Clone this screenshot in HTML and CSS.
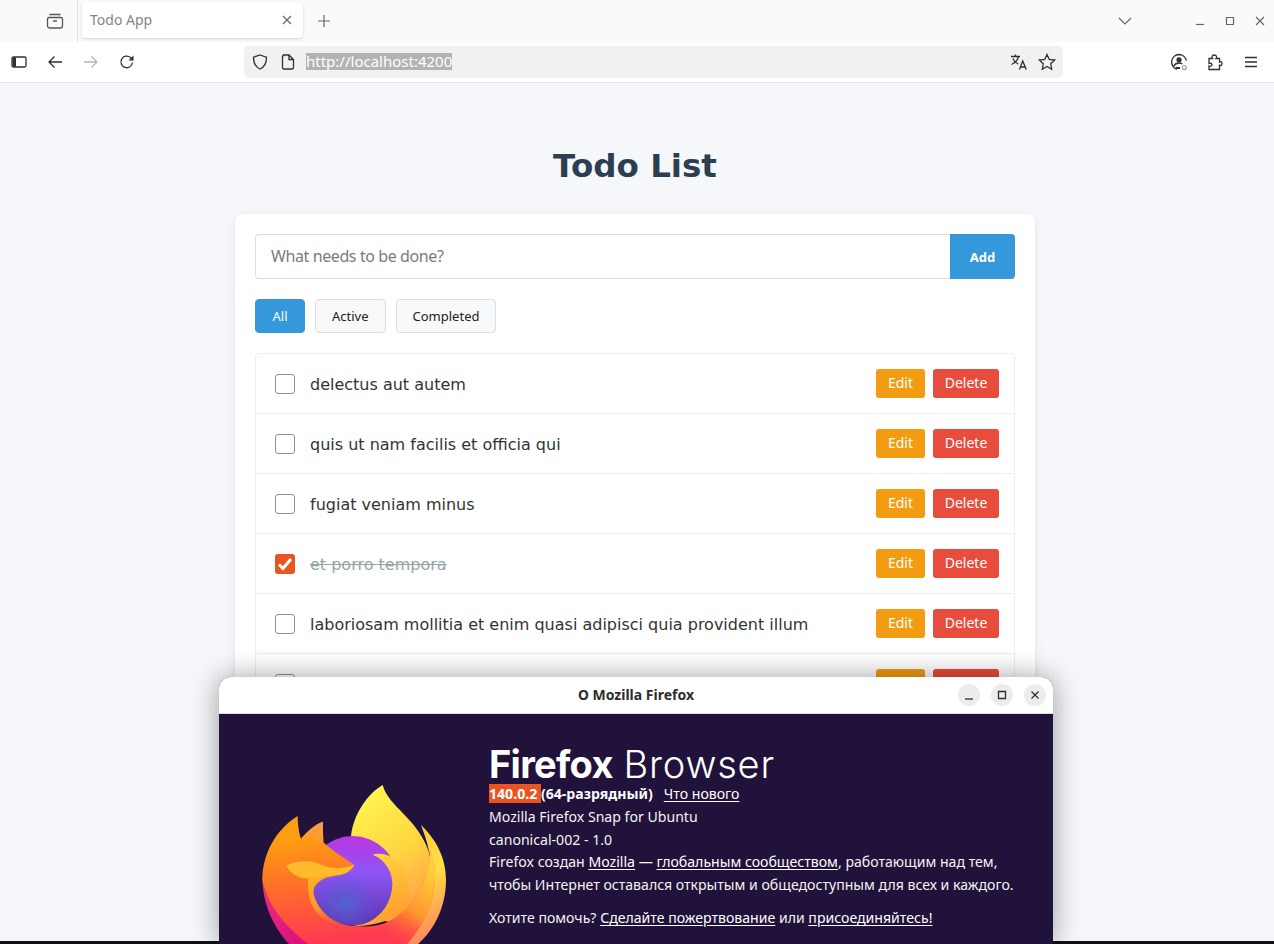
FILE: index.html
```html
<!DOCTYPE html>
<html lang="en">
<head>
<meta charset="utf-8">
<title>Todo App</title>
<link rel="stylesheet" href="styles.css">
</head>
<body>
<div class="browser">
  <div class="tabstrip">
    <div class="tab-group">
      <svg class="ico" width="20" height="20" viewBox="0 0 20 20"><path d="M4.500 3.500h11M2.500 8a1.500 1.500 0 0 1 1.500-1.500h12a1.500 1.500 0 0 1 1.500 1.500v7a2 2 0 0 1-2 2h-11a2 2 0 0 1-2-2zM8 10h4"/></svg>
    </div>
    <div class="tab"><span class="tab-title">Todo App</span>
      <svg class="ico-thin" width="12" height="12" viewBox="0 0 12 12"><path d="M2 2l8 8M10 2l-8 8"/></svg>
    </div>
    <svg class="ico-thin new-tab" width="14" height="14" viewBox="0 0 14 14"><path d="M7 1v12M1 7h12"/></svg>
    <div class="strip-right">
      <svg class="ico-thin" width="14" height="8" viewBox="0 0 14 8"><path d="M1 1l6 6 6-6"/></svg>
      <div class="win-controls">
        <svg class="ico-thin" width="10" height="10" viewBox="0 0 10 10"><path d="M1 8.500h8"/></svg>
        <svg class="ico-thin" width="10" height="10" viewBox="0 0 10 10"><path d="M1.500 1.500h7v7h-7z"/></svg>
        <svg class="ico-thin" width="10" height="10" viewBox="0 0 10 10"><path d="M1 1l8 8M9 1l-8 8"/></svg>
      </div>
    </div>
  </div>
  <div class="toolbar">
    <div class="tool-group">
      <span class="tool"><svg class="ico-dark" width="16" height="16" viewBox="0 0 16 16"><rect x="1" y="3" width="14" height="10" rx="1.500"/><path class="solid" d="M1.500 3.500h3.500v9h-3.500z"/></svg></span>
      <span class="tool"><svg class="ico-dark" width="16" height="16" viewBox="0 0 16 16"><path d="M15 8H2M7.500 2.500L2 8l5.500 5.500"/></svg></span>
      <span class="tool"><svg class="ico-off" width="16" height="16" viewBox="0 0 16 16"><path d="M1 8h13M8.500 2.500L14 8l-5.500 5.500"/></svg></span>
      <span class="tool"><svg class="ico-dark" width="16" height="16" viewBox="0 0 16 16"><path d="M13.500 8.500a5.800 5.800 0 1 1-2-5l2.300 2"/><path class="solid" d="M14.500 1.500v5h-5z"/></svg></span>
    </div>
    <div class="urlbar">
      <svg class="ico-dark" width="16" height="16" viewBox="0 0 16 16"><path d="M8 1l6.500 2.200c0 6-2 9.800-6.500 11.800C3.500 13 1.500 9.200 1.500 3.200z"/></svg>
      <svg class="ico-dark doc" width="14" height="16" viewBox="0 0 14 16"><path d="M2.500 1h5.500l4.500 4.500v8a1.500 1.500 0 0 1-1.500 1.500h-8.500a1.500 1.500 0 0 1-1-1.500v-11a1 1 0 0 1 1-1zM8 1v4.500h4.500"/></svg>
      <span class="url">http://localhost:4200</span>
      <span class="url-end">
        <svg class="ico-dark" width="18" height="18" viewBox="0 0 18 18"><path d="M1 3.500h9M5.500 1.500v2M8.500 3.500c-.8 3.500-3.500 6.500-7 8M2.800 5.500c1 2.500 3 4.500 5.500 5.500M9.500 16.500l3.200-8.500 3.600 8.500M10.700 14h4.500"/></svg>
        <svg class="ico-dark" width="18" height="18" viewBox="0 0 18 18"><path d="M9 1.500l2.300 5 5.300.6-3.900 3.700 1 5.400L9 13.500l-4.700 2.700 1-5.400L1.400 7.100l5.300-.6z"/></svg>
      </span>
    </div>
    <div class="tool-group">
      <span class="tool"><svg class="ico-dark" width="18" height="18" viewBox="0 0 18 18"><path d="M9 1.500a7.500 7.500 0 0 0-2 14.700M9 1.500a7.500 7.500 0 0 1 7.300 6M3.800 13c1-2 3-3 5.200-3 1.300 0 2.500.3 3.400 1"/><circle class="solid" cx="9" cy="6.800" r="2.600"/><path class="solid" d="M6 14h4v2H6z"/><circle class="grey" cx="14.300" cy="14.500" r="2"/></svg></span>
      <span class="tool"><svg class="ico-dark" width="18" height="18" viewBox="0 0 18 18"><path d="M3 5.500h3.500c-1-1-.8-3.500 1.800-3.500s2.800 2.500 1.800 3.500h3.400v3.500c1-.8 2.500-.5 2.500 1.500s-1.500 2.500-2.500 1.700v4.300H3v-3.500c1.500.8 3-.2 3-1.500S4 10 3 10.500z"/></svg></span>
      <span class="tool"><svg class="ico-dark" width="16" height="16" viewBox="0 0 16 16"><path d="M2 3.500h12M2 8h12M2 12.500h12"/></svg></span>
    </div>
  </div>
  <main class="page">
    <h1 class="title">Todo List</h1>
    <section class="card">
      <form class="add-row">
        <input class="add-input" type="text" placeholder="What needs to be done?">
        <button class="add-btn" type="button">Add</button>
      </form>
      <div class="filters">
        <button class="filter filter-on" type="button">All</button>
        <button class="filter" type="button">Active</button>
        <button class="filter" type="button">Completed</button>
      </div>
      <ul class="list">
        <li class="item"><span class="check"></span><span class="item-text">delectus aut autem</span><button class="act edit" type="button">Edit</button><button class="act del" type="button">Delete</button></li>
        <li class="item"><span class="check"></span><span class="item-text">quis ut nam facilis et officia qui</span><button class="act edit" type="button">Edit</button><button class="act del" type="button">Delete</button></li>
        <li class="item"><span class="check"></span><span class="item-text">fugiat veniam minus</span><button class="act edit" type="button">Edit</button><button class="act del" type="button">Delete</button></li>
        <li class="item"><span class="check check-on"><svg width="20" height="20" viewBox="0 0 20 20"><path d="M4 10.500l4 4 8-9.500"/></svg></span><span class="item-text item-done">et porro tempora</span><button class="act edit" type="button">Edit</button><button class="act del" type="button">Delete</button></li>
        <li class="item"><span class="check"></span><span class="item-text">laboriosam mollitia et enim quasi adipisci quia provident illum</span><button class="act edit" type="button">Edit</button><button class="act del" type="button">Delete</button></li>
        <li class="item"><span class="check"></span><span class="item-text"></span><button class="act edit" type="button"></button><button class="act del" type="button"></button></li>
      </ul>
    </section>
  </main>
</div>
<div class="desktop-strip"></div>
<div class="about">
  <header class="about-head">
    <span class="about-title">О Mozilla Firefox</span>
    <div class="about-controls">
      <span class="round"><svg width="12" height="12" viewBox="0 0 12 12"><path d="M2 10h8"/></svg></span>
      <span class="round"><svg width="12" height="12" viewBox="0 0 12 12"><path d="M2.500 2.500h7v7h-7z"/></svg></span>
      <span class="round"><svg width="12" height="12" viewBox="0 0 12 12"><path d="M2.500 2.500l7 7M9.500 2.500l-7 7"/></svg></span>
    </div>
  </header>
  <div class="about-body">
    <svg class="logo" width="200" height="164" viewBox="0 0 600 492">
      <defs>
        <linearGradient id="gBack" x1="0.35" y1="0" x2="0.75" y2="1"><stop offset="0" stop-color="#fff44f"/><stop offset=".5" stop-color="#ffd640"/><stop offset="1" stop-color="#ff9a48"/></linearGradient>
        <linearGradient id="gRight" x1="0.4" y1="0" x2="0.7" y2="1"><stop offset="0" stop-color="#ffc93c"/><stop offset=".45" stop-color="#ffdf45"/><stop offset="1" stop-color="#ff7f60"/></linearGradient>
        <linearGradient id="gBase" x1="0" y1="0" x2="0.7" y2="1"><stop offset="0" stop-color="#f0307a"/><stop offset="1" stop-color="#d9107f"/></linearGradient>
        <linearGradient id="gBody" gradientUnits="userSpaceOnUse" x1="190" y1="170" x2="220" y2="480"><stop offset="0" stop-color="#ff9d12"/><stop offset=".4" stop-color="#ff7426"/><stop offset="1" stop-color="#ff3a50"/></linearGradient>
        <linearGradient id="gBodyR" gradientUnits="userSpaceOnUse" x1="535" y1="270" x2="400" y2="470"><stop offset="0" stop-color="#ffd03a"/><stop offset=".55" stop-color="#ff9a2e"/><stop offset="1" stop-color="#ff5a3a" stop-opacity="0"/></linearGradient>
        <linearGradient id="gEar" x1="0.8" y1="0" x2="0.3" y2="1"><stop offset="0" stop-color="#ff9a50"/><stop offset="1" stop-color="#ff9a1e"/></linearGradient>
        <linearGradient id="gGlobe" x1="0.5" y1="0" x2="0.5" y2="1"><stop offset="0" stop-color="#bb35de"/><stop offset=".4" stop-color="#8f55f6"/><stop offset="1" stop-color="#5a36ae"/></linearGradient>
        <radialGradient id="gGlobeIn" cx="0.42" cy="0.75" r="0.35"><stop offset="0" stop-color="#4f66cc" stop-opacity=".9"/><stop offset="1" stop-color="#5f55d8" stop-opacity="0"/></radialGradient>
        <linearGradient id="gNeck" x1="0.3" y1="0" x2="0.7" y2="1"><stop offset="0" stop-color="#ffb01e"/><stop offset=".5" stop-color="#ff9a2a"/><stop offset="1" stop-color="#ff6a3a" stop-opacity="0"/></linearGradient>
        <linearGradient id="gCres" x1="0.3" y1="0" x2="0.7" y2="1"><stop offset="0" stop-color="#ffd83c"/><stop offset="1" stop-color="#ff9a2e"/></linearGradient>
      </defs>
      <path d="M22 290C22 370 55 445 110 500L190 500C100 440 40 380 22 290Z" fill="url(#gBase)"/>
      <path d="M288 170C295 100 340 40 383 15C395 60 440 90 480 140C510 180 530 220 530 270C525 340 470 395 400 425L288 400Z" fill="url(#gBack)"/>
      <path d="M498 135C540 175 573 230 573 300C573 390 530 460 480 500L380 500C450 450 520 380 527 270C530 240 525 225 520 205C515 180 505 155 498 135Z" fill="url(#gRight)"/>
      <circle cx="293" cy="302" r="134" fill="url(#gGlobe)"/>
      <circle cx="293" cy="302" r="134" fill="url(#gGlobeIn)"/>
      <path d="M128 108C60 150 22 225 22 300C40 380 90 440 170 500L450 500C505 440 540 370 540 285C540 255 533 230 525 210C530 290 470 390 400 425C365 440 330 442 295 437C225 435 178 375 175 335C175 310 205 290 240 287C270 285 285 275 298 255C270 235 235 215 205 187L203 125C180 135 160 150 138 176C132 160 128 130 128 108Z" fill="url(#gBody)"/>
      <path d="M525 210C530 290 470 390 400 425C365 440 330 442 295 437C340 470 400 500 450 500C505 440 540 370 540 285C540 255 533 230 525 210Z" fill="url(#gBodyR)"/>
      <path d="M138 176C160 150 180 135 203 125L205 187C185 180 160 175 138 176Z" fill="url(#gEar)"/>
      <path d="M160 295C155 340 165 380 195 410C225 435 260 443 295 437C225 435 178 375 175 335C175 310 205 290 240 287Z" fill="url(#gNeck)"/>
      <path d="M93 257C125 240 170 240 200 255C230 268 265 265 298 255C285 280 260 285 235 287C205 290 175 295 160 295C130 298 108 280 93 257Z" fill="#ffbb2a"/>
      <path d="M352 224C372 218 400 222 416 236C430 245 450 270 460 310C464 340 462 365 455 385C420 420 350 442 295 437C360 435 412 380 412 310C412 270 385 235 352 224Z" fill="url(#gCres)"/>
    </svg>
    <div class="about-text">
      <div class="wordmark"><span class="wm-bold">Firefox</span> <span class="wm-light">Browser</span></div>
      <p class="version"><strong><span class="ver-num">140.0.2 </span>(64-разрядный)</strong><a class="link whats-new">Что нового</a></p>
      <p class="line">Mozilla Firefox Snap for Ubuntu</p>
      <p class="line">canonical-002 - 1.0</p>
      <p class="line">Firefox создан <a class="link">Mozilla</a> — <a class="link">глобальным сообществом</a>, работающим над тем,</p>
      <p class="line">чтобы Интернет оставался открытым и общедоступным для всех и каждого.</p>
      <p class="line line-gap">Хотите помочь? <a class="link">Сделайте пожертвование</a> или <a class="link">присоединяйтесь!</a></p>
    </div>
  </div>
</div>
</body>
</html>
```
FILE: styles.css
```css
* { box-sizing: border-box; }
html, body { margin: 0; padding: 0; height: 944px; overflow: hidden; }
body { position: relative; background: #111; font-family: "Noto Sans", sans-serif; }
svg { display: block; flex: none; fill: none; }

.browser { height: 941px; display: flex; flex-direction: column; overflow: hidden; background: #f5f7fa; }

.tabstrip { height: 42px; flex: none; display: flex; align-items: center; background: #fafafa; position: relative; }
.tab-group { width: 78px; height: 42px; display: flex; align-items: center; justify-content: flex-end; padding-right: 12px; border-right: 1px solid #e3e3e6; }
.ico { stroke: #55555c; stroke-width: 1.3; }
.ico-thin { stroke: #66666c; stroke-width: 1.2; }
.tab { width: 221px; height: 36px; margin: -2px 0 0 4px; padding: 0 10px 0 8px; display: flex; align-items: center; justify-content: space-between; background: #fff; border-radius: 4px; box-shadow: 0 1px 3px rgba(0,0,0,.16); }
.tab-title { font-size: 14px; line-height: 16px; padding-bottom: 1px; color: #84848a; }
.new-tab { margin-left: 14px; }
.strip-right { margin-left: auto; display: flex; align-items: center; }
.win-controls { display: flex; gap: 20px; margin-left: 63px; padding-right: 9px; }

.toolbar { height: 41px; flex: none; display: flex; align-items: center; padding: 0 5px 1px 1px; background: #fff; border-bottom: 1px solid #e4e4e8; }
.tool-group { display: flex; }
.tool { width: 36px; height: 32px; display: flex; align-items: center; justify-content: center; }
.ico-dark { stroke: #2f2f33; stroke-width: 1.3; }
.ico-off { stroke: #b4b4b8; stroke-width: 1.3; }
.solid { fill: #2f2f33; stroke: none; }
.grey { fill: #fff; stroke: #9a9a9f; stroke-width: 1.1; }
.urlbar { flex: 1; height: 32px; margin: 0 98px 0 99px; display: flex; align-items: center; padding: 0 7px 0 8px; background: #f1f1f1; border-radius: 5px; }
.doc { margin-left: 13px; }
.url { margin-left: 11px; font-size: 15px; line-height: 17px; color: #fff; background: #b3b3b3; }
.url-end { margin-left: auto; display: flex; gap: 10px; }

.page { flex: 1; overflow: hidden; padding-right: 4px; }
.title { margin: 64px 0 29px; font: 700 32.500px/38px "DejaVu Sans", sans-serif; color: #2c3e50; text-align: center; }
.card { width: 800px; margin: 0 auto; padding: 20px; background: #fff; border-radius: 8px; box-shadow: 0 2px 10px rgba(0,0,0,.08); }
.add-row { display: flex; height: 45px; margin: 0; }
.add-input { flex: 1; min-width: 0; padding: 0 15px 2px; font-family: "Noto Sans", sans-serif; font-size: 16px; letter-spacing: -0.400px; border: 1px solid #ddd; border-right: 0; border-radius: 4px 0 0 4px; background: #fff; outline: none; }
.add-input::placeholder { color: #7b7b7b; opacity: 1; }
.add-btn { width: 65px; padding: 0; border: 0; border-radius: 0 4px 4px 0; background: #3498db; color: #fff; font: 700 13px "Noto Sans", sans-serif; }
.filters { display: flex; gap: 10px; margin: 20px 0; }
.filter { height: 34px; padding: 0 16px; border: 1px solid #ddd; border-radius: 4px; background: #f8f9fa; color: #222; font: 13px "Noto Sans", sans-serif; }
.filter-on { width: 50px; padding: 0; border-color: #3498db; background: #3498db; color: #fff; }
.list { list-style: none; margin: 0; padding: 0; border: 1px solid #eee; border-radius: 4px; }
.item { height: 60px; display: flex; align-items: center; gap: 8px; padding: 0 15px 0 19px; border-bottom: 1px solid #eee; }
.check { width: 20px; height: 20px; flex: none; border: 1px solid #8f8f9d; border-radius: 3px; background: #fff; }
.check-on { border: 0; background: #e95420; }
.check-on path { stroke: #fff; stroke-width: 3; }
.item-text { flex: 1; margin-left: 7px; padding-top: 2px; font: 16px "DejaVu Sans", sans-serif; color: #333; }
.item-done { color: #95a5a6; text-decoration: line-through; }
.act { height: 29px; padding: 0 0 2px; border: 0; border-radius: 3px; color: #fff; font: 14px "Noto Sans", sans-serif; }
.edit { width: 49px; background: #f39c12; }
.del { width: 66px; background: #e74c3c; }

.desktop-strip { height: 3px; background: #111; }

.about { position: absolute; left: 219px; top: 677px; width: 834px; height: 267px; border-radius: 12px 12px 0 0; box-shadow: 0 0 28px rgba(0,0,0,.38); background: #20123a; }
.about-head { height: 37px; display: flex; align-items: center; justify-content: center; position: relative; padding-bottom: 2px; background: #fff; border-radius: 12px 12px 0 0; border-bottom: 1px solid #dcdce0; }
.about-title { font-size: 14px; font-weight: 700; color: #2d2d2d; }
.about-controls { position: absolute; right: 7px; top: 7px; display: flex; gap: 11px; }
.round { width: 22px; height: 22px; display: flex; align-items: center; justify-content: center; border-radius: 50%; background: #ececec; }
.round svg { stroke: #2d2d2d; stroke-width: 1.300; }
.about-body { height: 230px; display: flex; color: #fff; overflow: hidden; }
.logo { margin: 66px 0 0 36px; }
.about-text { margin-left: 34px; padding-top: 29px; }
.wordmark { height: 40px; line-height: 43px; font-family: Inter, sans-serif; font-size: 38px; white-space: nowrap; }
.wm-bold { font-weight: 700; letter-spacing: -0.700px; }
.wm-light { font-weight: 300; letter-spacing: 0.800px; }
.version, .line { margin: 0; font-size: 14.100px; line-height: 22.800px; color: #f4f4f4; white-space: nowrap; }
.version strong { font-weight: 700; color: #fff; }
.ver-num { background: #e95420; }
.whats-new { margin-left: 11px; }
.link { color: #fff; text-decoration: underline; text-underline-offset: 2px; }
.line-gap { margin-top: 10px; }
```
